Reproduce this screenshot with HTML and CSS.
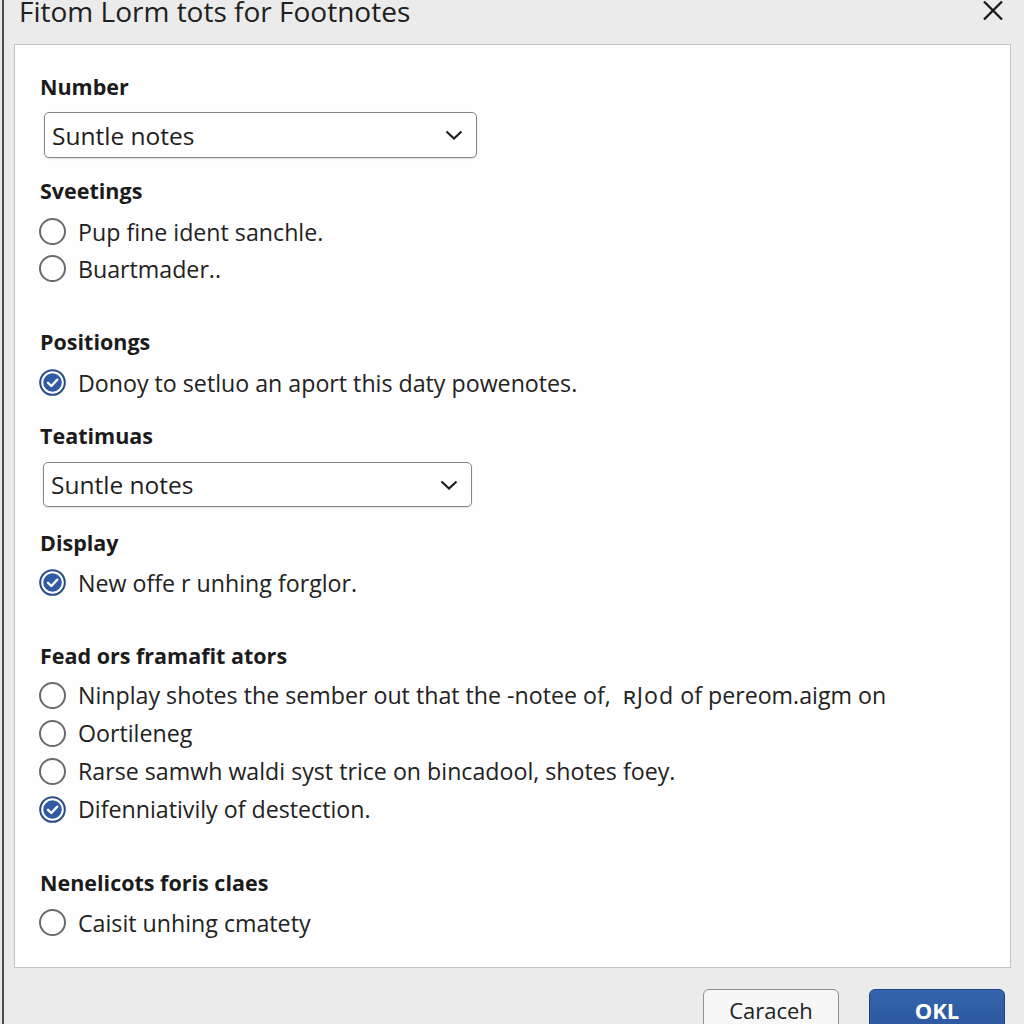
FILE: index.html
```html
<!DOCTYPE html>
<html lang="en">
<head>
<meta charset="utf-8">
<title>Footnotes</title>
<link rel="stylesheet" href="styles.css">
</head>
<body>
<div class="window">
  <header class="titlebar">
    <h1 class="title">Fitom Lorm tots for Footnotes</h1>
    <button class="close" aria-label="Close">
      <svg width="22" height="22" viewBox="0 0 22 22"><path d="M2 1.5 L20 19.5 M20 1.5 L2 19.5" stroke="#1a1a1a" stroke-width="2.4" fill="none"/></svg>
    </button>
  </header>

  <main class="panel">
    <div class="label">Number</div>
    <div class="select sel-1">
      <span>Suntle notes</span>
      <svg class="chev" width="18" height="10" viewBox="0 0 18 10"><path d="M1.5 1.5 L9 8.5 L16.5 1.5" stroke="#1e1e1e" stroke-width="2.2" fill="none"/></svg>
    </div>

    <div class="label mt-18">Sveetings</div>
    <div class="group mt-7">
      <div class="row"><span class="radio"></span><span>Pup fine ident sanchle.</span></div>
      <div class="row"><span class="radio"></span><span>Buartmader..</span></div>
    </div>

    <div class="label mt-40">Positiongs</div>
    <div class="group mt-7">
      <div class="row"><span class="radio checked"><svg width="27" height="27" viewBox="0 0 27 27"><circle cx="13.5" cy="13.5" r="12.3" fill="#fff" stroke="#2a4a86" stroke-width="2"/><circle cx="13.5" cy="13.5" r="9.3" fill="#2f5ba4"/><path d="M9 13.8 L12.3 17 L18.3 10.6" stroke="#fff" stroke-width="2.3" fill="none" stroke-linecap="round" stroke-linejoin="round"/></svg></span><span>Donoy to setluo an aport this daty powenotes.</span></div>
    </div>

    <div class="label mt-20">Teatimuas</div>
    <div class="select sel-2">
      <span>Suntle notes</span>
      <svg class="chev" width="18" height="10" viewBox="0 0 18 10"><path d="M1.5 1.5 L9 8.5 L16.5 1.5" stroke="#1e1e1e" stroke-width="2.2" fill="none"/></svg>
    </div>

    <div class="label mt-21">Display</div>
    <div class="group mt-6">
      <div class="row"><span class="radio checked"><svg width="27" height="27" viewBox="0 0 27 27"><circle cx="13.5" cy="13.5" r="12.3" fill="#fff" stroke="#2a4a86" stroke-width="2"/><circle cx="13.5" cy="13.5" r="9.3" fill="#2f5ba4"/><path d="M9 13.8 L12.3 17 L18.3 10.6" stroke="#fff" stroke-width="2.3" fill="none" stroke-linecap="round" stroke-linejoin="round"/></svg></span><span>New offe r unhing forglor.</span></div>
    </div>

    <div class="label mt-40">Fead ors framafit ators</div>
    <div class="group group-tall mt-5">
      <div class="row"><span class="radio"></span><span>Ninplay shotes the sember out that the -notee of, <span class="odd">ʀJod</span> of pereom.aigm on</span></div>
      <div class="row"><span class="radio"></span><span>Oortileneg</span></div>
      <div class="row"><span class="radio"></span><span>Rarse samwh waldi syst trice on bincadool, shotes foey.</span></div>
      <div class="row"><span class="radio checked"><svg width="27" height="27" viewBox="0 0 27 27"><circle cx="13.5" cy="13.5" r="12.3" fill="#fff" stroke="#2a4a86" stroke-width="2"/><circle cx="13.5" cy="13.5" r="9.3" fill="#2f5ba4"/><path d="M9 13.8 L12.3 17 L18.3 10.6" stroke="#fff" stroke-width="2.3" fill="none" stroke-linecap="round" stroke-linejoin="round"/></svg></span><span>Difenniativily of destection.</span></div>
    </div>

    <div class="label mt-40">Nenelicots foris claes</div>
    <div class="group mt-6">
      <div class="row"><span class="radio"></span><span>Caisit unhing cmatety</span></div>
    </div>
  </main>

  <footer class="footer">
    <button class="btn btn-cancel">Caraceh</button>
    <button class="btn btn-ok">OKL</button>
  </footer>
</div>
</body>
</html>
```

FILE: styles.css
```css
* {
  box-sizing: border-box;
  margin: 0;
  padding: 0;
}

html, body {
  width: 1024px;
  height: 1024px;
  overflow: hidden;
}

body {
  background: #e8e8e8;
  font-family: "Open Sans", "Noto Sans", sans-serif;
  color: #222;
}

.window {
  margin-left: 2px;
  border-left: 2px solid #4e4e4e;
  height: 1024px;
  background: #ebebeb;
  display: flex;
  flex-direction: column;
}

.titlebar {
  height: 44px;
  flex: none;
  display: flex;
  justify-content: space-between;
  align-items: flex-start;
  padding: 0 20px 0 15px;
}

.title {
  font-size: 28px;
  font-weight: 400;
  line-height: 18px;
  height: 18px;
  margin-top: 2px;
  color: #202020;
  white-space: nowrap;
}

.close {
  width: 22px;
  height: 22px;
  border: 0;
  background: none;
  display: block;
}

.close svg {
  display: block;
}

.panel {
  flex: none;
  height: 924px;
  margin: 0 13px 0 10px;
  background: #fefefe;
  border: 1px solid #c4c4c4;
  padding: 27px 25px 0;
  display: flex;
  flex-direction: column;
  align-items: flex-start;
}

.label {
  font-size: 21.5px;
  font-weight: 700;
  line-height: 30px;
  color: #1b1b1b;
}

.select {
  display: flex;
  align-items: center;
  justify-content: space-between;
  border: 1.5px solid #858585;
  border-radius: 5px;
  padding: 0 13px 0 7px;
  font-size: 24.5px;
  color: #1e1e1e;
  background: #fff;
  box-shadow: 0 1px 2px rgba(0, 0, 0, 0.12);
}

.sel-1 {
  margin-top: 10px;
  margin-left: 4px;
  width: 433px;
  height: 46px;
}

.sel-2 {
  margin-top: 11px;
  margin-left: 3px;
  width: 429px;
  height: 45px;
}

.chev {
  display: block;
}

.group {
  display: flex;
  flex-direction: column;
}

.row {
  display: flex;
  align-items: center;
  gap: 12px;
  height: 37px;
  margin-left: -1px;
  font-size: 23.2px;
  color: #222;
  white-space: nowrap;
}

.group-tall .row {
  height: 38px;
}

.radio {
  width: 27px;
  height: 27px;
  flex: none;
  border-radius: 50%;
  border: 2px solid #6a6a6a;
  background: #fff;
}

.radio.checked {
  border: 0;
  background: none;
}

.radio.checked svg {
  display: block;
}

.odd {
  margin-left: 6px;
  letter-spacing: 1px;
}

.mt-5 { margin-top: 5px; }
.mt-6 { margin-top: 6px; }
.mt-7 { margin-top: 7px; }
.mt-18 { margin-top: 18px; }
.mt-20 { margin-top: 20px; }
.mt-21 { margin-top: 21px; }
.mt-40 { margin-top: 40px; }

.footer {
  flex: 1;
  display: flex;
  justify-content: flex-end;
  align-items: flex-start;
  gap: 30px;
  padding: 21px 19px 0 0;
}

.btn {
  width: 136px;
  height: 46px;
  border-radius: 6px;
  font-family: "Open Sans", "Noto Sans", sans-serif;
  font-size: 22px;
  line-height: 40px;
  padding-bottom: 4px;
  display: flex;
  justify-content: center;
  align-items: flex-start;
}

.btn-cancel {
  background: #f7f7f7;
  border: 1.5px solid #8f8f8f;
  color: #222;
}

.btn-ok {
  background: linear-gradient(#3564ad, #2a579e);
  border: 1.5px solid #1f4587;
  color: #fff;
  font-weight: 700;
}
```
